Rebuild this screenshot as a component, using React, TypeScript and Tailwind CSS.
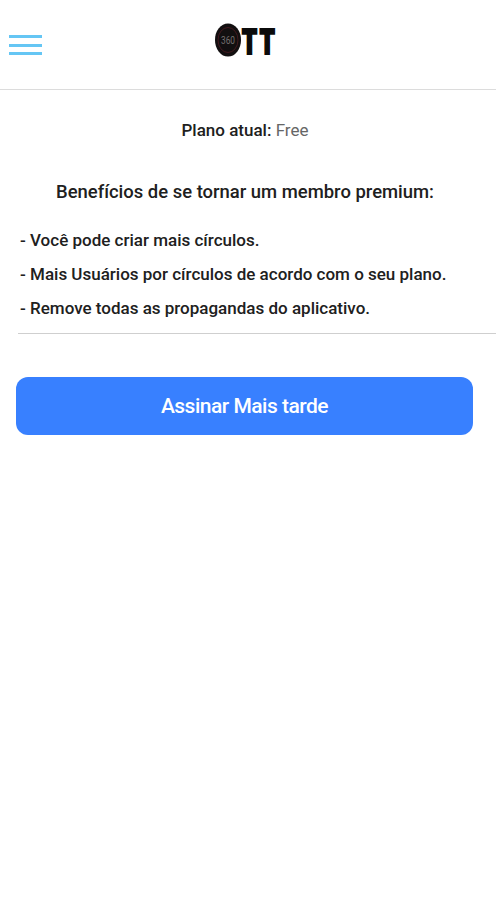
const benefits = [
  'Você pode criar mais círculos.',
  'Mais Usuários por círculos de acordo com o seu plano.',
  'Remove todas as propagandas do aplicativo.',
];

function Logo() {
  return (
    <svg width="68" height="44" viewBox="0 0 68 44" className="block overflow-visible">
      <ellipse cx="14" cy="20" rx="13" ry="16.5" fill="#120f10" />
      <ellipse cx="14" cy="20" rx="10" ry="12.5" fill="none" stroke="#43191e" strokeWidth="1" />
      <text
        x="14"
        y="23.5"
        textAnchor="middle"
        textLength="14"
        lengthAdjust="spacingAndGlyphs"
        fontSize="10"
        fill="#757071"
        fontFamily="Roboto, sans-serif"
      >
        360
      </text>
      <text
        transform="translate(28 34) scale(0.67 1)"
        fontSize="35.5"
        fontWeight="900"
        letterSpacing="4"
        fill="#0b0b0b"
        stroke="#0b0b0b"
        strokeWidth="2.2"
        fontFamily="Roboto, sans-serif"
      >
        TT
      </text>
    </svg>
  );
}

export default function App() {
  return (
    <div className="min-h-[900px] w-[496px] bg-white font-['Roboto',sans-serif] text-[#202020]">
      <header className="flex h-[90px] border-b border-[#dcdcdc] pl-[9px]">
        <button aria-label="Menu" className="mt-[35px] flex h-5 w-[33px] flex-col justify-between">
          <span className="h-[3px] w-full bg-[#65c6f4]" />
          <span className="h-[3px] w-full bg-[#65c6f4]" />
          <span className="h-[3px] w-full bg-[#65c6f4]" />
        </button>
        <div className="mt-[20px] ml-[172px]">
          <Logo />
        </div>
      </header>
      <main>
        <p className="mt-[28px] pr-[6px] text-center text-[17px] leading-6 text-[#666]">
          <span className="font-medium text-[#202020]">Plano atual:</span> Free
        </p>
        <h1 className="mt-[38px] pr-[6px] text-center text-[18.45px] leading-6 font-medium">
          Benefícios de se tornar um membro premium:
        </h1>
        <ul className="mt-[19px] ml-[18px] flex h-[111px] flex-col border-b border-[#cfcfcf] pl-[2px]">
          {benefits.map((text) => (
            <li key={text} className="h-[34px] text-[17px] leading-[34px] font-medium whitespace-nowrap">
              - {text}
            </li>
          ))}
        </ul>
        <button className="mt-[43px] ml-4 h-[58px] w-[457px] rounded-xl bg-[#3880ff] pt-[2px] text-[21px] font-medium tracking-[-0.5px] text-white">
          Assinar Mais tarde
        </button>
      </main>
    </div>
  );
}
